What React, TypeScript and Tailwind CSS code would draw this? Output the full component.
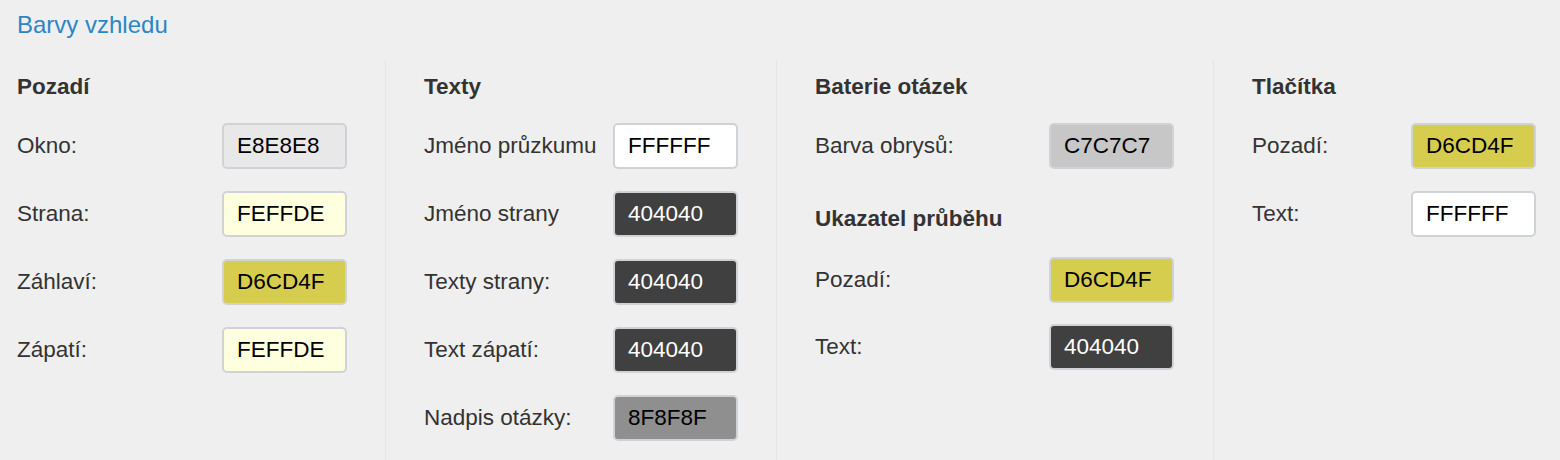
import React from 'react';

type Field = { label: string; value: string; bg: string; dark?: boolean };

const Swatch: React.FC<Field & { gap?: string }> = ({ label, value, bg, dark, gap }) => (
  <div className={`flex items-center justify-between h-[46px] ${gap ?? 'mb-[22px]'}`}>
    <span className="text-[22.5px] leading-[28px] text-[#333]">{label}</span>
    <input
      type="text"
      readOnly
      value={value}
      style={{ backgroundColor: bg }}
      className={`w-[125px] h-[46px] pl-[13px] pr-2 border-2 border-[#cfd3d7] rounded-[5px] text-[22.5px] outline-none ${
        dark ? 'text-white' : 'text-black'
      }`}
    />
  </div>
);

const Heading: React.FC<{ children: React.ReactNode; className?: string }> = ({ children, className }) => (
  <h3 className={`text-[22.5px] leading-[24px] font-bold text-[#333] ${className ?? ''}`}>{children}</h3>
);

export default function App() {
  const pozadi: Field[] = [
    { label: 'Okno:', value: 'E8E8E8', bg: '#e8e8e8' },
    { label: 'Strana:', value: 'FEFFDE', bg: '#feffde' },
    { label: 'Záhlaví:', value: 'D6CD4F', bg: '#d6cd4f' },
    { label: 'Zápatí:', value: 'FEFFDE', bg: '#feffde' },
  ];

  const texty: Field[] = [
    { label: 'Jméno průzkumu', value: 'FFFFFF', bg: '#ffffff' },
    { label: 'Jméno strany', value: '404040', bg: '#404040', dark: true },
    { label: 'Texty strany:', value: '404040', bg: '#404040', dark: true },
    { label: 'Text zápatí:', value: '404040', bg: '#404040', dark: true },
    { label: 'Nadpis otázky:', value: '8F8F8F', bg: '#8f8f8f' },
  ];

  const tlacitka: Field[] = [
    { label: 'Pozadí:', value: 'D6CD4F', bg: '#d6cd4f' },
    { label: 'Text:', value: 'FFFFFF', bg: '#ffffff' },
  ];

  return (
    <div className="w-[1560px] h-[460px] overflow-hidden bg-[#efefef] font-['Liberation_Sans',Arial,sans-serif]">
      <h2 className="pl-[17px] pt-[11px] text-[24px] leading-[28px] text-[#2b86c5]">Barvy vzhledu</h2>

      <div className="mt-[21px] flex h-[400px]">
        <div className="w-[385px] pl-[17px] pr-[38px] pt-[15px]">
          <Heading className="mb-[24px]">Pozadí</Heading>
          {pozadi.map((f) => (
            <Swatch key={f.label} {...f} />
          ))}
        </div>

        <div className="w-[391px] pl-[38px] pr-[38px] pt-[15px] border-l border-[#e6e6e6]">
          <Heading className="mb-[24px]">Texty</Heading>
          {texty.map((f) => (
            <Swatch key={f.label} {...f} />
          ))}
        </div>

        <div className="w-[437px] pl-[38px] pr-[39px] pt-[15px] border-l border-[#e6e6e6]">
          <Heading className="mb-[24px]">Baterie otázek</Heading>
          <Swatch label="Barva obrysů:" value="C7C7C7" bg="#c7c7c7" />
          <Heading className="pt-[16px] mb-[26px]">Ukazatel průběhu</Heading>
          <Swatch label="Pozadí:" value="D6CD4F" bg="#d6cd4f" gap="mb-[21px]" />
          <Swatch label="Text:" value="404040" bg="#404040" dark />
        </div>

        <div className="w-[347px] pl-[38px] pr-[24px] pt-[15px] border-l border-[#e6e6e6]">
          <Heading className="mb-[24px]">Tlačítka</Heading>
          {tlacitka.map((f) => (
            <Swatch key={f.label} {...f} />
          ))}
        </div>
      </div>
    </div>
  );
}
